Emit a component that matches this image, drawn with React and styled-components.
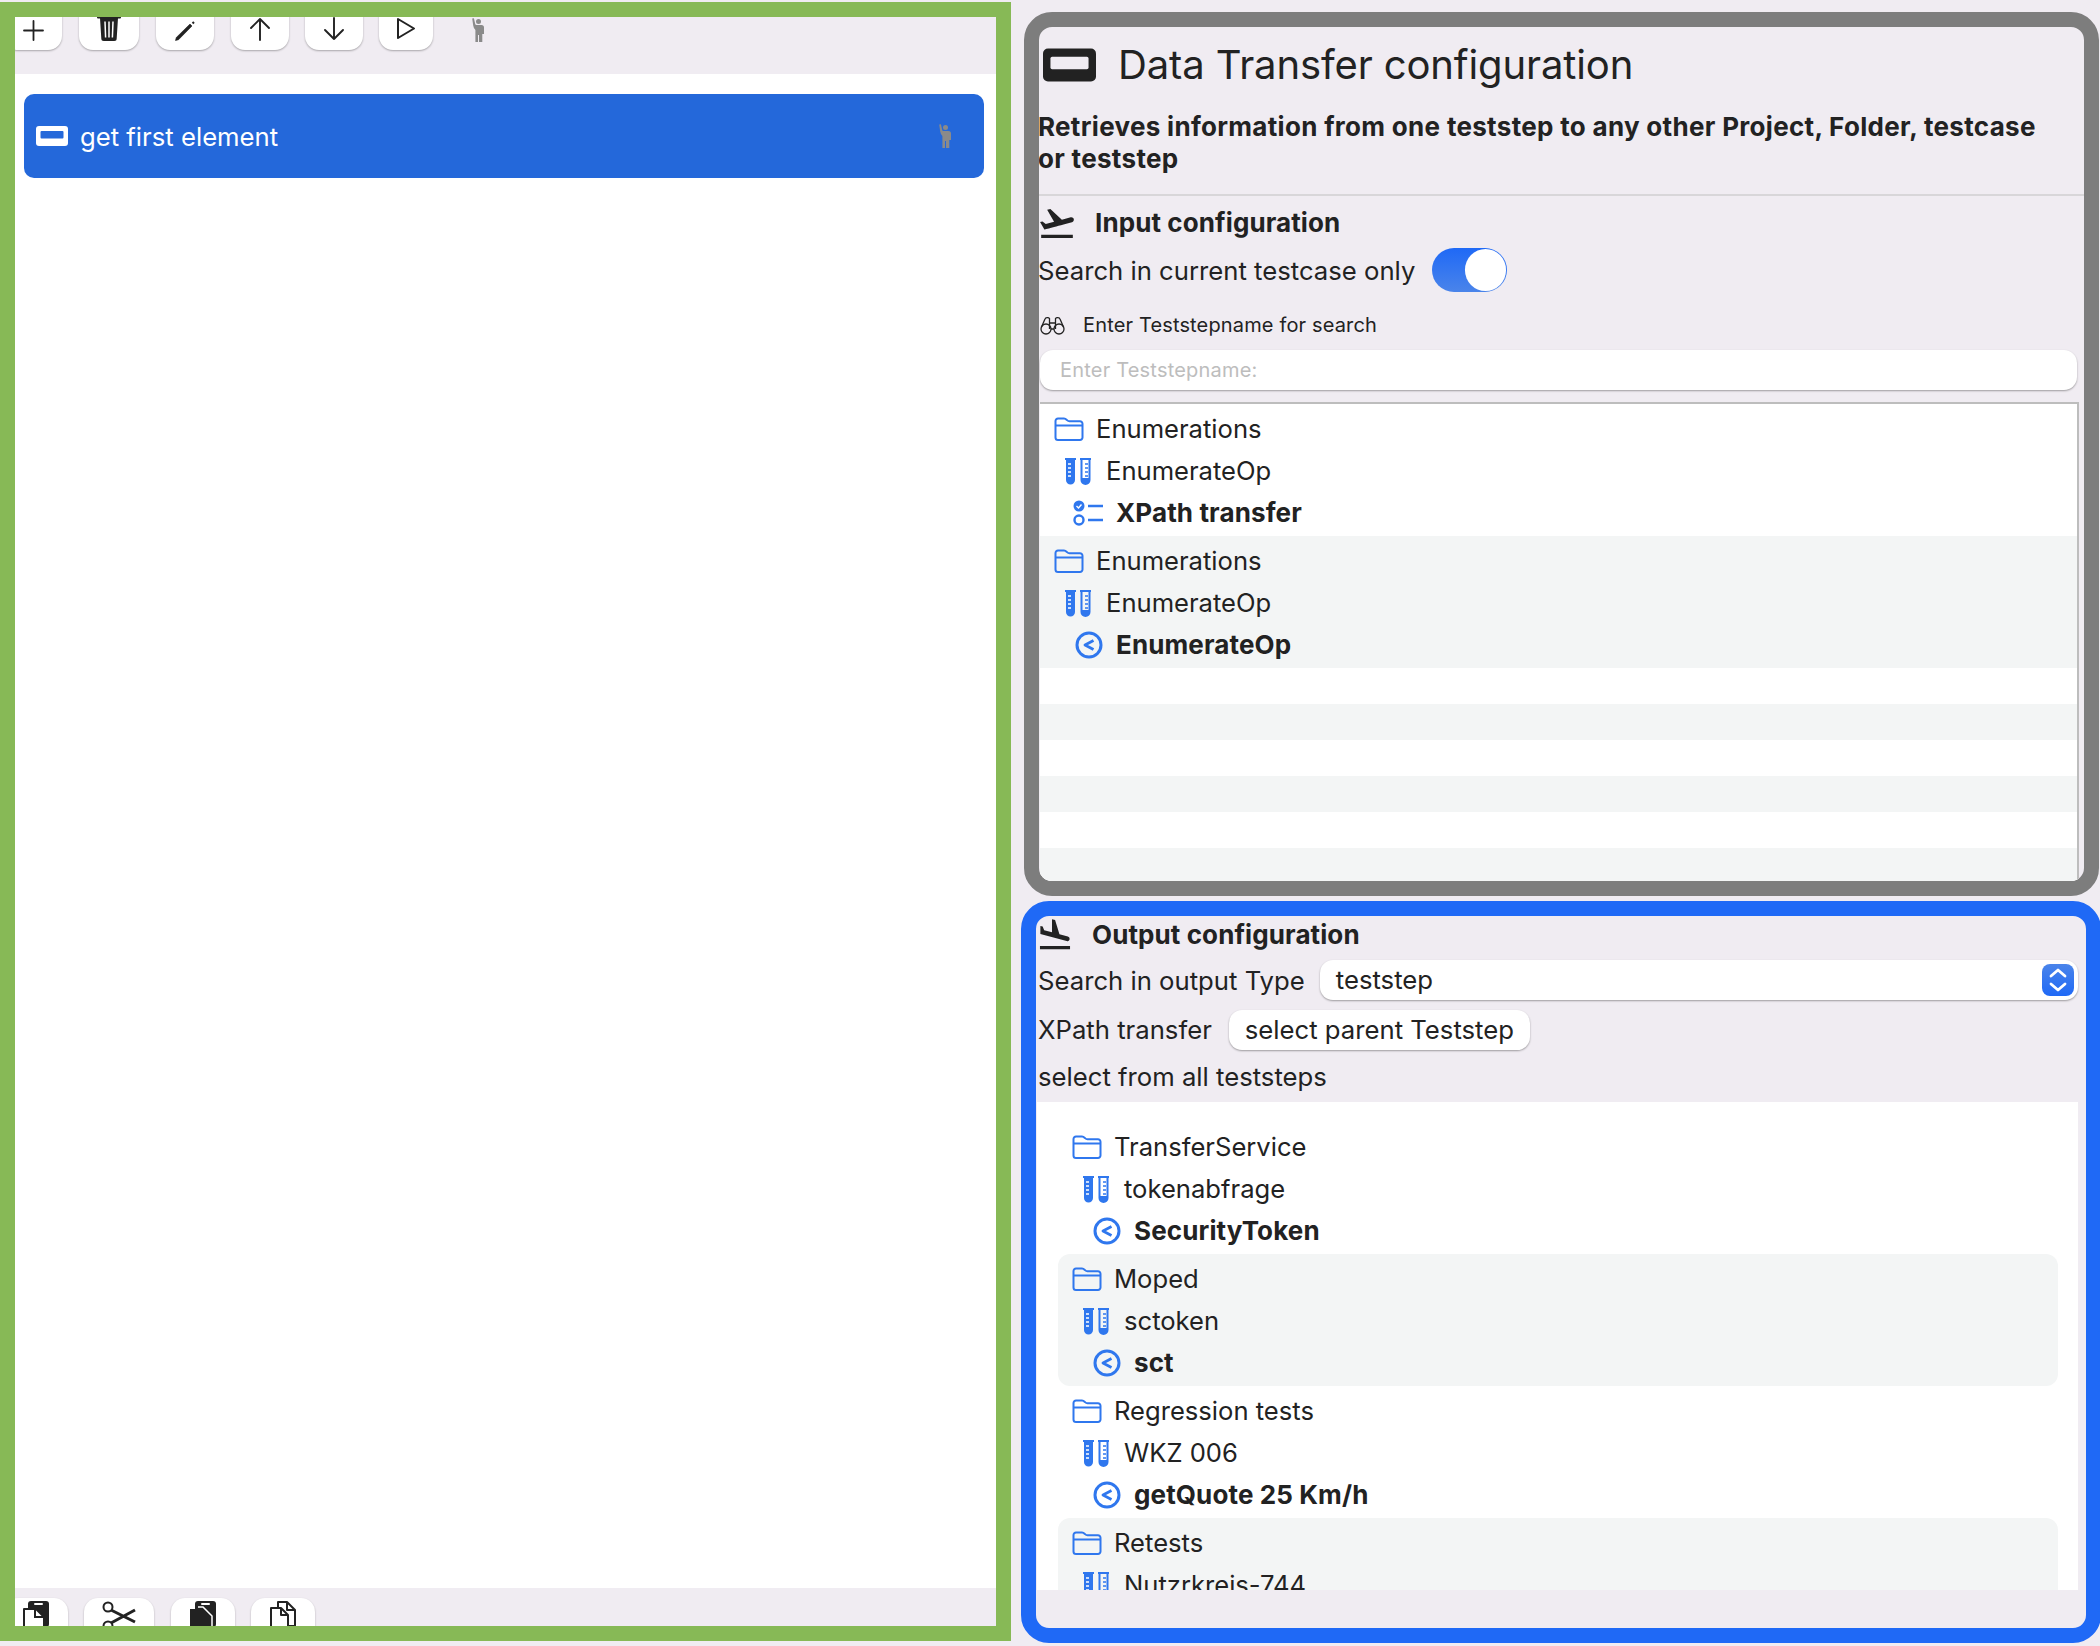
import React from "react";
import styled, { createGlobalStyle } from "styled-components";
import { MdFlightTakeoff, MdFlightLand } from "react-icons/md";

const Global = createGlobalStyle`
  html, body { margin: 0; padding: 0; background: #f0ecf2; }
  body { font-family: Inter, "Liberation Sans", sans-serif; color: #222; }
  * { box-sizing: border-box; }
`;

const Page = styled.div`
  width: 2100px; height: 1646px; display: flex; overflow: hidden; background: #f0ecf2;
`;
const LeftPanel = styled.section`
  width: 1011px; height: 1639px; margin-top: 2px; flex: none;
  border: 15px solid #87b956; display: flex; flex-direction: column; overflow: hidden;
`;
const TopBar = styled.div`
  height: 57px; flex: none; display: flex; align-items: flex-end; gap: 17px; padding-bottom: 24px; overflow: hidden; background: #f0ecf2;
`;
const BottomBar = styled.div`
  height: 38px; flex: none; display: flex; align-items: flex-start; gap: 16px; padding-top: 10px; overflow: hidden; background: #f0ecf2;
`;
const ToolButton = styled.div`
  width: ${p => p.$w}px; height: 60px; flex: none; margin-left: ${p => p.$ml || 0}px;
  background: #fff; border-radius: 14px; box-shadow: 0 1px 2px rgba(0,0,0,.3);
  display: flex; align-items: ${p => p.$top ? "flex-start" : "flex-end"}; justify-content: center;
  padding: ${p => p.$top ? "3px 0 0" : "0 0 9px"}; color: #222;
  svg { flex: none; }
`;
const FigureSlot = styled.div`
  width: 30px; height: 32px; margin-left: 13px; flex: none; align-self: flex-end; color: #8a8a8a; display: flex; align-items: flex-start; justify-content: center;
`;
const StepList = styled.div`
  flex: 1; background: #fff; padding: 20px 12px 0 9px;
`;
const StepRow = styled.div`
  height: 84px; border-radius: 10px; background: #2468da; color: #fff; display: flex; align-items: center; padding: 0 33px 0 12px;
  font-size: 25.7px; gap: 12px;
`;
const StepName = styled.span` flex: 1; `;

const RightColumn = styled.div`
  width: 1089px; flex: none; padding-top: 12px; display: flex; flex-direction: column; gap: 5px;
`;
const ConfigPanel = styled.section`
  height: 884px; flex: none; margin: 0 1px 0 13px; border: 15px solid #7d7d7d; border-radius: 28px; display: flex; flex-direction: column; overflow: hidden;
  background: #f0ecf2;
`;
const OutputPanel = styled.section`
  height: 742px; flex: none; margin: 0 -1px 0 10px; border: 15px solid #1f69f6; border-radius: 28px; display: flex; flex-direction: column; overflow: hidden;
  background: #f0ecf2;
`;
const TitleRow = styled.div`
  height: 52px; margin-top: 12px; display: flex; align-items: center; gap: 22px; padding-left: 4px; flex: none;
`;
const Title = styled.h1`
  margin: 0; font-size: 40px; font-weight: 400; line-height: 52px; letter-spacing: -.12px;
`;
const Description = styled.p`
  margin: 20px 0 0 -1px; font-size: 26px; font-weight: 700; line-height: 32px; letter-spacing: .31px; flex: none;
`;
const Divider = styled.hr`
  margin: 19px 0 0; border: 0; height: 2px; background: #d8d6d9; flex: none;
`;
const SectionRow = styled.div`
  display: flex; align-items: center; height: ${p => p.$h}px; margin-top: ${p => p.$mt || 0}px; gap: 18px; flex: none;
  font-size: 26px; font-weight: 700; letter-spacing: .1px;
  svg { flex: none; margin-left: ${p => p.$iconShift || 0}px; }
`;
const RaisedText = styled.span`
  margin-bottom: 2px;
`;
const FieldRow = styled.div`
  display: flex; align-items: center; gap: ${p => p.$gap || 17}px; height: 40px; margin-top: ${p => p.$mt || 0}px; font-size: 25.7px; flex: none; padding-left: ${p => p.$pl || 0}px;
`;
const ToggleRow = styled(FieldRow)` height: 44px; margin-left: -1px; `;
const Toggle = styled.div`
  width: 75px; height: 44px; border-radius: 22px; background: linear-gradient(#1f69f6, #4a84ea); display: flex; justify-content: flex-end; padding: 1px;
`;
const Knob = styled.div`
  width: 41px; height: 42px; border-radius: 21px; background: #fff;
`;
const SearchLabel = styled.div`
  display: flex; align-items: center; gap: 18px; height: 26px; margin-top: 20px; padding-left: 1px; font-size: 20px; letter-spacing: .15px; flex: none;
  svg { flex: none; }
`;
const SearchInput = styled.div`
  height: 40px; margin: 12px 7px 0 1px; background: #fff; border-radius: 13px; box-shadow: 0 1px 2px rgba(0,0,0,.35); color: #bdbdbd; font-size: 20px; letter-spacing: .2px; display: flex; align-items: center; padding-left: 20px; flex: none;
`;
const Tree = styled.div`
  flex: 1; min-height: 0; margin: 12px 5px 0 1px; background: #fff; border-top: 2px solid #bdbdbd; border-right: 2px solid #bdbdbd; overflow: hidden;
`;
const Group = styled.div`
  height: 132px; background: ${p => p.$alt ? "#f3f5f5" : "#fff"}; padding: 4px 0 0 14px; border-radius: ${p => p.$radius || 0}px;
`;
const Stripe = styled.div`
  height: 36px; background: ${p => p.$alt ? "#f3f5f5" : "#fff"};
`;
const TreeRow = styled.div`
  height: 42px; display: flex; align-items: center; padding-left: ${p => p.$pad || 0}px; font-size: 25.6px; gap: ${p => p.$gap}px; white-space: nowrap;
  svg { flex: none; }
`;
const StepLabel = styled.b`
  font-size: 26px; font-weight: 700; letter-spacing: .12px; margin-bottom: 2px;
`;
const Select = styled.div`
  flex: 1; height: 40px; margin-right: 8px; background: #fff; border-radius: 13px; box-shadow: 0 1px 2px rgba(0,0,0,.35); display: flex; align-items: center; justify-content: space-between; padding: 0 4px 0 16px; font-size: 25.7px;
`;
const Stepper = styled.div`
  width: 32px; height: 32px; border-radius: 8px; background: linear-gradient(#4a84ea, #1f69f6); display: flex; align-items: center; justify-content: center;
`;
const Button = styled.div`
  height: 40px; background: #fff; border-radius: 13px; box-shadow: 0 1px 2px rgba(0,0,0,.35); display: flex; align-items: center; padding: 0 16px; font-size: 25.7px;
`;
const OutputList = styled.div`
  height: 488px; flex: none; margin: 5px 8px 0 1px; background: #fff; padding: 20px 20px 0 21px; overflow: hidden;
`;

const Card = ({ w, h, color = "#222", hole = "#f0ecf2" }) => (
  <svg width={w} height={h} viewBox="0 0 32 20">
    <rect width="32" height="20" rx="3" fill={color} />
    <rect x="4.500" y="5" width="23" height="7.500" rx="1" fill={hole} />
  </svg>
);
const Folder = () => (
  <svg width="30" height="24" viewBox="0 0 30 24" fill="none" stroke="#2f77ee" strokeWidth="2">
    <path d="M1.5 20.5V4a2.5 2.5 0 0 1 2.5-2.5h6c1.5 0 2 .6 3 1.6.8.8 1.4 1.2 2.5 1.2H26a2.5 2.5 0 0 1 2.5 2.5v13.7a2.5 2.5 0 0 1-2.5 2.5H4a2.5 2.5 0 0 1-2.5-2.5z" />
    <path d="M1.5 8.5h27" />
  </svg>
);
const Tubes = () => (
  <svg width="26" height="27" viewBox="0 0 26 27" fill="none">
    <path d="M0 0h11v2h-1v20a4.500 4.500 0 0 1-9 0V2H0z" fill="#2f77ee" />
    <path d="M3 6h3M3 10h3M3 14h3M3 18h3" stroke="#fff" strokeWidth="1.500" />
    <path d="M15 1h11M16.500 1v21a4 4 0 0 0 8 0V1" stroke="#2f77ee" strokeWidth="2" />
    <path d="M16.500 20h8v2a4 4 0 0 1-8 0z" fill="#2f77ee" />
    <path d="M20 6h3M20 10h3M20 14h3M20 18h3" stroke="#2f77ee" strokeWidth="1.500" />
  </svg>
);
const Back = () => (
  <svg width="28" height="28" viewBox="0 0 28 28" fill="none" stroke="#2f77ee">
    <circle cx="14" cy="14" r="12" strokeWidth="3" />
    <path d="M18.500 9.500 10 14l8.500 4.500" strokeWidth="2.800" strokeLinejoin="round" />
  </svg>
);
const Checklist = () => (
  <svg width="30" height="26" viewBox="0 0 30 26" fill="none">
    <circle cx="6" cy="6" r="5.500" fill="#2f77ee" />
    <path d="M3.500 6l2 2 3-3.500" stroke="#fff" strokeWidth="1.400" />
    <circle cx="6" cy="20" r="4.500" stroke="#2f77ee" strokeWidth="2.400" />
    <path d="M15 6h15M15 20h15" stroke="#2f77ee" strokeWidth="2.600" />
  </svg>
);
const BinocularsIcon = () => (
  <svg width="25" height="19" viewBox="0 0 25 19" fill="none" stroke="#222" strokeWidth="1.300">
    <circle cx="6" cy="13" r="5" />
    <circle cx="19" cy="13" r="5" />
    <path d="M1.500 11 5 3c.6-1.500 3.500-2 4.500-.5V13M23.500 11 20 3c-.6-1.500-3.500-2-4.500-.5V13M9.500 7h6M11 13h3" />
  </svg>
);
const Figure = ({ color = "currentColor" }) => (
  <svg width="12" height="24" viewBox="0 0 12 24" fill={color}>
    <circle cx="6.500" cy="3.600" r="2.500" />
    <path d="M.2.500 1.900.2 3.300 6.200Q3.500 7 4.400 7H9.500Q12 7 12 9.500V16H10.300V24H7V17H6V24H3.400V12Q1.500 10 1.200 7.500Z" />
  </svg>
);
const Trash = () => (
  <svg width="24" height="26" viewBox="0 0 24 26" fill="#222">
    <rect width="24" height="3.500" rx="1" />
    <path d="M3 3h18l-1.300 20.500a2.500 2.500 0 0 1-2.500 2.500H6.800a2.500 2.500 0 0 1-2.500-2.500z" />
    <path d="M8 6.500l.6 16M12 6.500v16M16 6.500l-.6 16" stroke="#fff" strokeWidth="1.500" />
  </svg>
);
const Pencil = () => (
  <svg width="20" height="20" viewBox="0 0 20 20" fill="none" stroke="#222">
    <path d="M.5 19.500l.8-3L15 3l2 2L3.500 18.700z" fill="#222" strokeWidth=".6" />
    <path d="M17.500 1l1.500 1.500" strokeWidth="2" />
  </svg>
);
const PlusIcon = () => (
  <svg width="21" height="21" viewBox="0 0 21 21" fill="none" stroke="#222" strokeWidth="1.800" strokeLinecap="round">
    <path d="M10.500 1v19M1 10.500h19" />
  </svg>
);
const UpIcon = () => (
  <svg width="20" height="24" viewBox="0 0 20 24" fill="none" stroke="#222" strokeWidth="1.900" strokeLinecap="round" strokeLinejoin="round">
    <path d="M10 23V2M1 11l9-9 9 9" />
  </svg>
);
const DownIcon = () => (
  <svg width="20" height="24" viewBox="0 0 20 24" fill="none" stroke="#222" strokeWidth="1.900" strokeLinecap="round" strokeLinejoin="round">
    <path d="M10 1v21M1 13l9 9 9-9" />
  </svg>
);
const PlayIcon = () => (
  <svg width="20" height="24" viewBox="0 0 20 24" fill="none" stroke="#222" strokeWidth="2" strokeLinejoin="round">
    <path d="M2 2l16 9.500L2 21z" />
  </svg>
);
const PasteCut = () => (
  <svg width="28" height="30" viewBox="0 0 28 30">
    <rect x="6" y="0" width="21" height="26" rx="3" fill="#222" />
    <rect x="12" y="2" width="9" height="2" rx="1" fill="#fff" />
    <path d="M2 8h12l8 8v14H2z" fill="#fff" stroke="#222" strokeWidth="2" strokeLinejoin="round" />
    <path d="M13 8v8h9" fill="none" stroke="#222" strokeWidth="2" />
  </svg>
);
const Scissors = () => (
  <svg width="34" height="30" viewBox="0 0 34 30" fill="none" stroke="#222">
    <circle cx="6" cy="6" r="4.500" strokeWidth="2" />
    <circle cx="6" cy="25" r="4.500" strokeWidth="2" />
    <path d="M9 9l24 12M9 22L33 9" strokeWidth="3" />
  </svg>
);
const PasteFull = () => (
  <svg width="28" height="30" viewBox="0 0 28 30">
    <rect x="6" y="0" width="21" height="26" rx="3" fill="#222" />
    <rect x="12" y="2" width="9" height="2" rx="1" fill="#fff" />
    <path d="M1 8h12l10 9v13H1z" fill="#222" />
    <path d="M9 6h5l9 9v15" fill="none" stroke="#fff" strokeWidth="1.500" />
  </svg>
);
const Duplicate = () => (
  <svg width="28" height="30" viewBox="0 0 28 30" fill="#fff" stroke="#222" strokeWidth="2" strokeLinejoin="round">
    <path d="M9 1h9l8 8v16H9z" />
    <path d="M18 1v8h8" fill="none" />
    <path d="M2 7h10l7 7v16H2z" />
    <path d="M12 7v7h7" fill="none" />
  </svg>
);
const StepperArrows = () => (
  <svg width="20" height="26" viewBox="0 0 20 26" fill="none" stroke="#fff" strokeWidth="2.800" strokeLinecap="round" strokeLinejoin="round">
    <path d="M3 9l7-6 7 6M3 17l7 6 7-6" />
  </svg>
);

const topTools = [
  { w: 58, ml: -11, icon: <PlusIcon /> },
  { w: 60, icon: <Trash /> },
  { w: 58, icon: <Pencil /> },
  { w: 58, icon: <UpIcon /> },
  { w: 58, ml: -1, icon: <DownIcon /> },
  { w: 54, ml: -1, icon: <PlayIcon /> },
];
const bottomTools = [
  { w: 64, ml: -11, icon: <PasteCut /> },
  { w: 70, icon: <Scissors /> },
  { w: 64, ml: 1, icon: <PasteFull /> },
  { w: 64, icon: <Duplicate /> },
];

const Entry = ({ folder, testcase, step, stepIcon = <Back />, stepPad = 21 }) => (
  <>
    <TreeRow $gap={12}><Folder /><RaisedText>{folder}</RaisedText></TreeRow>
    <TreeRow $pad={11} $gap={15}><Tubes /><RaisedText>{testcase}</RaisedText></TreeRow>
    {step && <TreeRow $pad={stepPad} $gap={13}>{stepIcon}<StepLabel>{step}</StepLabel></TreeRow>}
  </>
);

const outputs = [
  { folder: "TransferService", testcase: "tokenabfrage", step: "SecurityToken" },
  { folder: "Moped", testcase: "sctoken", step: "sct" },
  { folder: "Regression tests", testcase: "WKZ 006", step: "getQuote 25 Km/h" },
  { folder: "Retests", testcase: "Nutzrkreis-744" },
];

export default function App() {
  return (
    <Page>
      <Global />
      <LeftPanel>
        <TopBar>
          {topTools.map((t, i) => (
            <ToolButton key={i} $w={t.w} $ml={t.ml}>{t.icon}</ToolButton>
          ))}
          <FigureSlot><Figure /></FigureSlot>
        </TopBar>
        <StepList>
          <StepRow>
            <Card w={32} h={20} color="#fff" hole="#2468da" />
            <StepName>get first element</StepName>
            <Figure color="#8a8a8a" />
          </StepRow>
        </StepList>
        <BottomBar>
          {bottomTools.map((t, i) => (
            <ToolButton key={i} $w={t.w} $ml={t.ml} $top>{t.icon}</ToolButton>
          ))}
        </BottomBar>
      </LeftPanel>
      <RightColumn>
        <ConfigPanel>
          <TitleRow>
            <Card w={53} h={34} />
            <Title>Data Transfer configuration</Title>
          </TitleRow>
          <Description>
            Retrieves information from one teststep to any other Project, Folder, testcase<br />or teststep
          </Description>
          <Divider />
          <SectionRow $h={40} $mt={7} $iconShift={-2}><MdFlightTakeoff size={40} /><RaisedText>Input configuration</RaisedText></SectionRow>
          <ToggleRow $mt={5}>Search in current testcase only<Toggle><Knob /></Toggle></ToggleRow>
          <SearchLabel><BinocularsIcon />Enter Teststepname for search</SearchLabel>
          <SearchInput>Enter Teststepname:</SearchInput>
          <Tree>
            <Group>
              <Entry folder="Enumerations" testcase="EnumerateOp" step="XPath transfer" stepIcon={<Checklist />} stepPad={19} />
            </Group>
            <Group $alt>
              <Entry folder="Enumerations" testcase="EnumerateOp" step="EnumerateOp" />
            </Group>
            <Stripe />
            <Stripe $alt />
            <Stripe />
            <Stripe $alt />
            <Stripe />
            <Stripe $alt />
          </Tree>
        </ConfigPanel>
        <OutputPanel>
          <SectionRow $h={38}><MdFlightLand size={38} /><RaisedText>Output configuration</RaisedText></SectionRow>
          <FieldRow $mt={6} $pl={2} $gap={15}>Search in output Type<Select><RaisedText>teststep</RaisedText><Stepper><StepperArrows /></Stepper></Select></FieldRow>
          <FieldRow $mt={10} $pl={2}><RaisedText>XPath transfer</RaisedText><Button><RaisedText>select parent Teststep</RaisedText></Button></FieldRow>
          <FieldRow $mt={7} $pl={2}><RaisedText>select from all teststeps</RaisedText></FieldRow>
          <OutputList>
            {outputs.map((o, i) => (
              <Group key={o.folder} $alt={i % 2 === 1} $radius={12}>
                <Entry folder={o.folder} testcase={o.testcase} step={o.step} />
              </Group>
            ))}
          </OutputList>
        </OutputPanel>
      </RightColumn>
    </Page>
  );
}
